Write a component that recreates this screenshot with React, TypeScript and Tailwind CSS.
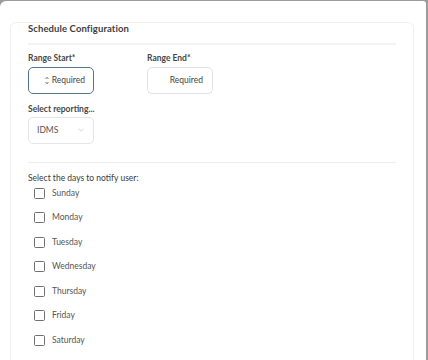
const days = ["Sunday", "Monday", "Tuesday", "Wednesday", "Thursday", "Friday", "Saturday"];

function Spinner() {
  return (
    <svg width="4" height="9" viewBox="0 0 4 9" className="mr-[3px]">
      <path d="M0.6 3 L2 1.2 L3.4 3" fill="none" stroke="#666" strokeWidth="0.9" />
      <path d="M0.6 6 L2 7.8 L3.4 6" fill="none" stroke="#666" strokeWidth="0.9" />
    </svg>
  );
}

export default function App() {
  return (
    <div
      className="w-[428px] h-[360px] overflow-hidden bg-[#9c9c9c] pt-px pr-[2px]"
      style={{ fontFamily: "Lato, 'Noto Sans', sans-serif" }}
    >
      <div className="h-full bg-white rounded-tl-[6px] rounded-tr-[3px] pt-[21px] pl-[10px] pr-[12px]">
        <div className="h-[400px] border border-[#eeeff1] rounded-[6px] px-[17px]">
          <p className="text-[9.5px] leading-[10px] pt-px font-bold text-[#404040] tracking-[0.1px]">Schedule Configuration</p>
          <div className="mt-[9px] border-t-2 border-[#f2f3f5]" />

          <div className="flex mt-[7px]">
            <div className="w-[119px]">
              <p className="text-[8.5px] leading-[12px] font-bold text-[#474747]">Range Start*</p>
              <div className="mt-[2.5px] w-[66px] h-[27px] rounded-[5px] border-[1.5px] border-[#52788a] flex items-center justify-end pr-[8px]">
                <Spinner />
                <span className="text-[8.5px] text-[#444]">Required</span>
              </div>
            </div>
            <div>
              <p className="text-[8.5px] leading-[12px] font-bold text-[#474747]">Range End*</p>
              <div className="mt-[2.5px] w-[66px] h-[27px] rounded-[5px] border border-[#dfe3e8] flex items-center justify-end pr-[9px]">
                <span className="text-[8.5px] text-[#444]">Required</span>
              </div>
            </div>
          </div>

          <p className="mt-[9px] text-[8.5px] leading-[12px] font-bold text-[#474747]">Select reporting...</p>
          <div className="mt-[2px] w-[66px] h-[27px] rounded-[5px] border border-[#e3e6ea] flex items-center justify-between pl-[8px] pr-[9px]">
            <span className="text-[8.5px] text-[#555]">IDMS</span>
            <svg width="6" height="4" viewBox="0 0 6 4">
              <path d="M0.5 0.8 L3 3.2 L5.5 0.8" fill="none" stroke="#cfd3d8" strokeWidth="0.9" />
            </svg>
          </div>

          <div className="mt-[18px] border-t border-[#eceef1]" />

          <p className="mt-[9px] text-[8.5px] leading-[12px] text-[#3a3a3a]">Select the days to notify user:</p>
          <div className="mt-[3.5px] flex flex-col gap-[12.5px]">
            {days.map((d) => (
              <div key={d} className="h-[12px] flex items-center gap-[7px] pl-[6px]">
                <div className="w-[11px] h-[11px] rounded-[1.5px] border-[1.5px] border-[#707070]" />
                <span className="text-[8.5px] text-[#555]">{d}</span>
              </div>
            ))}
          </div>
        </div>
      </div>
    </div>
  );
}
